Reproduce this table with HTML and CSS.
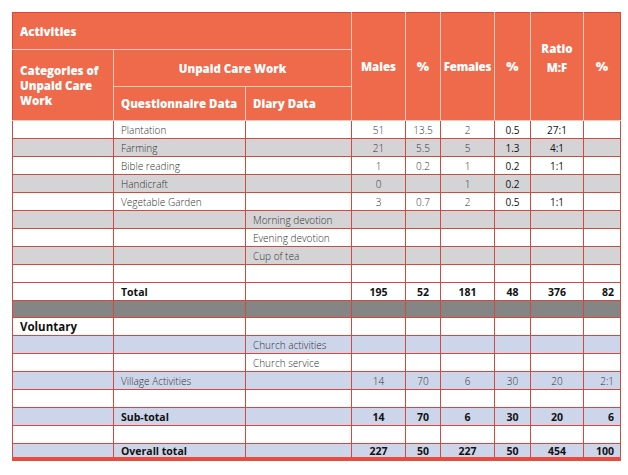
FILE: index.html
```html
<!DOCTYPE html>
<html>
<head>
<meta charset="utf-8">
<link rel="stylesheet" href="styles.css">
</head>
<body>
<table class="tbl">
  <colgroup>
    <col class="c1"><col class="c2"><col class="c3"><col class="c4"><col class="c5"><col class="c6"><col class="c7"><col class="c8"><col class="c9">
  </colgroup>
  <thead>
    <tr class="h1">
      <th colspan="3" class="left">Activities</th>
      <th rowspan="3">Males</th>
      <th rowspan="3" class="pct">%</th>
      <th rowspan="3" class="fem">Females</th>
      <th rowspan="3" class="pct">%</th>
      <th rowspan="3" class="ratio">Ratio<br>M:F<br>&nbsp;</th>
      <th rowspan="3" class="pct">%</th>
    </tr>
    <tr class="h2">
      <th rowspan="2" class="left">Categories of Unpaid Care Work</th>
      <th colspan="2">Unpaid Care Work</th>
    </tr>
    <tr class="h3">
      <th class="left">Questionnaire Data</th>
      <th class="left">Diary Data</th>
    </tr>
  </thead>
  <tbody>
    <tr class="w"><td></td><td class="t">Plantation</td><td></td><td>51</td><td>13.5</td><td>2</td><td class="dk">0.5</td><td class="dk">27:1</td><td></td></tr>
    <tr class="g"><td></td><td class="t">Farming</td><td></td><td>21</td><td>5.5</td><td>5</td><td class="dk">1.3</td><td class="dk">4:1</td><td></td></tr>
    <tr class="w"><td></td><td class="t">Bible reading</td><td></td><td>1</td><td>0.2</td><td>1</td><td class="dk">0.2</td><td class="dk">1:1</td><td></td></tr>
    <tr class="g"><td></td><td class="t">Handicraft</td><td></td><td>0</td><td></td><td>1</td><td class="dk">0.2</td><td></td><td></td></tr>
    <tr class="w"><td></td><td class="t">Vegetable Garden</td><td></td><td>3</td><td>0.7</td><td>2</td><td class="dk">0.5</td><td class="dk">1:1</td><td></td></tr>
    <tr class="g"><td></td><td></td><td class="t">Morning devotion</td><td></td><td></td><td></td><td></td><td></td><td></td></tr>
    <tr class="w"><td></td><td></td><td class="t">Evening devotion</td><td></td><td></td><td></td><td></td><td></td><td></td></tr>
    <tr class="g"><td></td><td></td><td class="t">Cup of tea</td><td></td><td></td><td></td><td></td><td></td><td></td></tr>
    <tr class="w"><td></td><td></td><td></td><td></td><td></td><td></td><td></td><td></td><td></td></tr>
    <tr class="w b"><td></td><td class="t">Total</td><td></td><td>195</td><td>52</td><td>181</td><td>48</td><td>376</td><td class="r">82</td></tr>
    <tr class="sep"><td></td><td></td><td></td><td></td><td></td><td></td><td></td><td></td><td></td></tr>
    <tr class="w"><td class="vol">Voluntary</td><td></td><td></td><td></td><td></td><td></td><td></td><td></td><td></td></tr>
    <tr class="l"><td></td><td></td><td class="t">Church activities</td><td></td><td></td><td></td><td></td><td></td><td></td></tr>
    <tr class="w"><td></td><td></td><td class="t">Church service</td><td></td><td></td><td></td><td></td><td></td><td></td></tr>
    <tr class="l"><td></td><td class="t">Village Activities</td><td></td><td>14</td><td>70</td><td>6</td><td>30</td><td>20</td><td class="r">2:1</td></tr>
    <tr class="w"><td></td><td></td><td></td><td></td><td></td><td></td><td></td><td></td><td></td></tr>
    <tr class="l b"><td></td><td class="t">Sub-total</td><td></td><td>14</td><td>70</td><td>6</td><td>30</td><td>20</td><td class="r">6</td></tr>
    <tr class="w"><td></td><td></td><td></td><td></td><td></td><td></td><td></td><td></td><td></td></tr>
    <tr class="l b last"><td></td><td class="t">Overall total</td><td></td><td>227</td><td>50</td><td>227</td><td>50</td><td>454</td><td class="r">100</td></tr>
  </tbody>
</table>
</body>
</html>
```

FILE: styles.css
```css
html, body {
  margin: 0;
  padding: 0;
  background: #ffffff;
}
body {
  padding: 12px 0 0 12px;
  font-family: "Open Sans", "Liberation Sans", sans-serif;
}
.tbl {
  border-collapse: collapse;
  table-layout: fixed;
  width: 608px;
}
.c1 { width: 101px; }
.c2 { width: 132px; }
.c3 { width: 106px; }
.c4 { width: 54px; }
.c5 { width: 35px; }
.c6 { width: 54px; }
.c7 { width: 36px; }
.c8 { width: 53px; }
.c9 { width: 37px; }

th {
  background: #ef6a4b;
  color: #ffffff;
  font-weight: 800;
  font-size: 11.5px;
  line-height: 15px;
  border: 1px solid #f8c6b6;
  padding: 0 4px;
  text-align: center;
  vertical-align: middle;
  white-space: normal;
}
th.left { text-align: left; padding-left: 7px; }
th.pct { font-size: 13px; }
th.fem { padding: 0 1px; letter-spacing: -0.2px; }
th.ratio { line-height: 19px; padding-top: 2px; }
.h1 { height: 37px; }
.h2 { height: 37px; }
.h3 { height: 34px; }
.h1 th { border-top-color: #d4493b; }
.h1 th:first-child { border-left-color: #d4493b; }
.h1 th:last-child { border-right-color: #d4493b; }
.h2 th:first-child { border-left-color: #d4493b; }

td {
  border: 1px solid #d24a3e;
  padding: 0 4px;
  height: 17px;
  font-size: 10px;
  line-height: 12px;
  font-weight: 300;
  color: #333333;
  text-align: center;
  vertical-align: middle;
  white-space: nowrap;
  overflow: hidden;
}
td.t { text-align: left; padding-left: 7px; }
td.dk { color: #111111; font-weight: 400; }
td.r { text-align: right; padding-right: 6px; }

tr.w td { background: #ffffff; }
tr.g td { background: #d4d4d6; }
tr.l td { background: #cdd5ea; }
tr.sep td { background: #858585; height: 16px; }

tr.b td { font-weight: 700; color: #111111; font-size: 10.5px; }
td.vol { text-align: left; padding-left: 7px; font-weight: 700; font-size: 11.5px; color: #111111; }

tr.last td { height: 13px; border-bottom: 4px solid #ea4b3c; }
```
